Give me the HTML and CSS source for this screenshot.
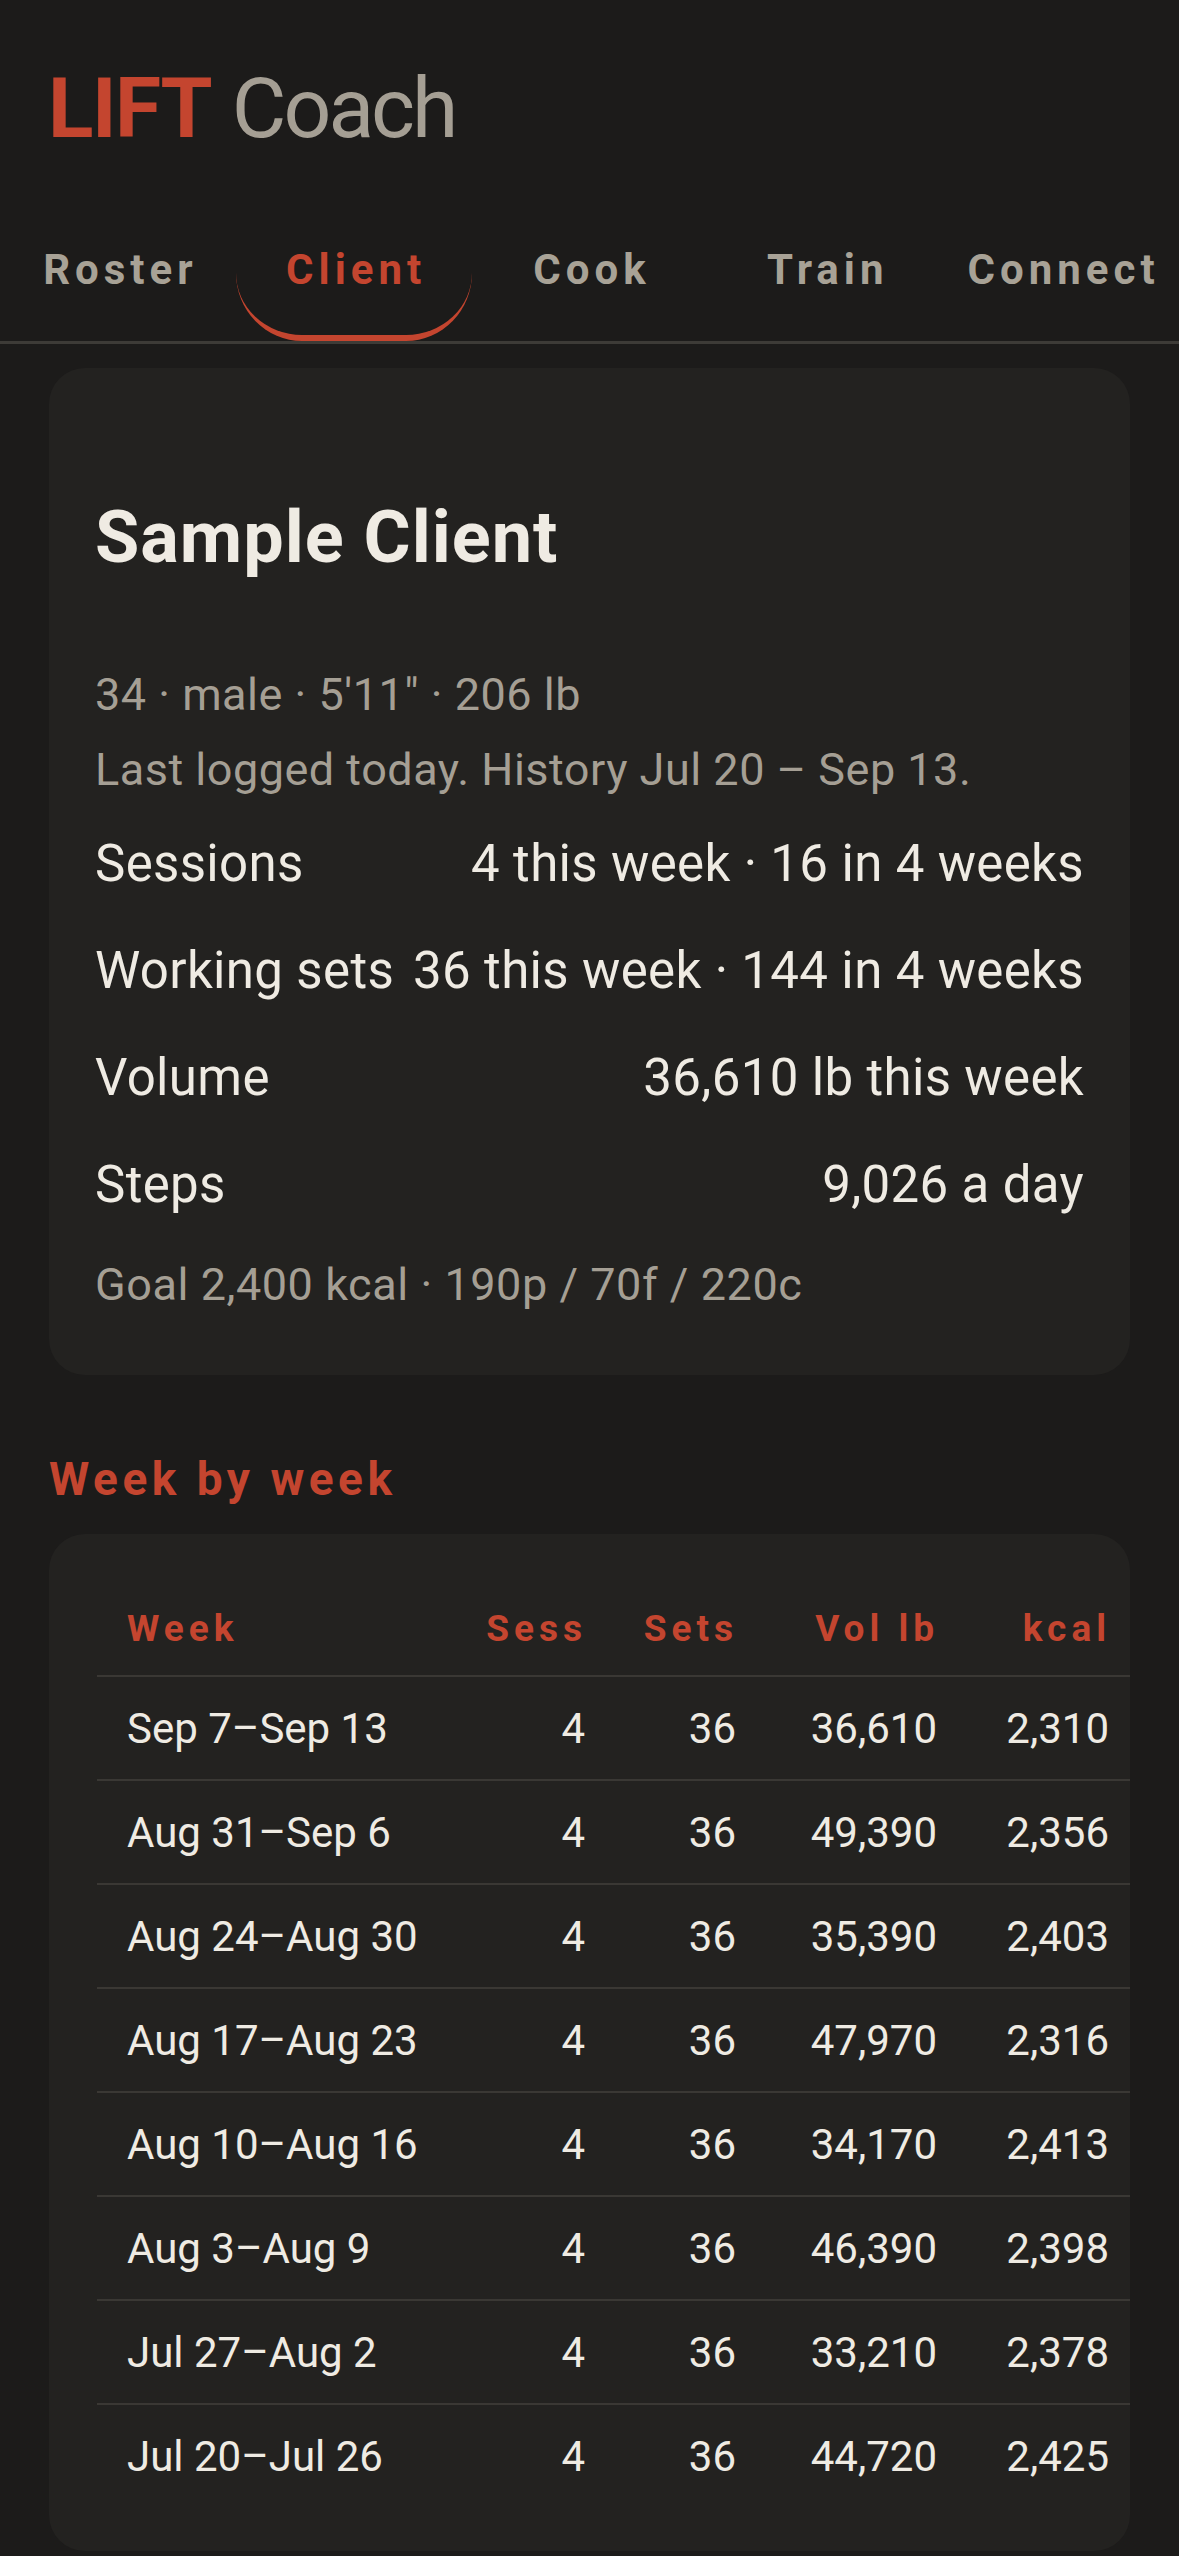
FILE: index.html
```html
<!DOCTYPE html>
<html lang="en">
<head>
<meta charset="utf-8">
<meta name="viewport" content="width=device-width, initial-scale=1">
<title>LIFT Coach</title>
<link rel="stylesheet" href="styles.css">
</head>
<body>
<header class="top">
  <h1 class="brand"><span class="brand-lift">LIFT</span> <span class="brand-coach">Coach</span></h1>
</header>
<nav class="tabs">
  <a class="tab">Roster</a>
  <a class="tab tab-active">Client</a>
  <a class="tab">Cook</a>
  <a class="tab">Train</a>
  <a class="tab">Connect</a>
</nav>
<main class="content">
  <section class="card profile">
    <h2 class="client-name">Sample Client</h2>
    <div class="meta">
      <p>34 · male · 5′11″ · 206 lb</p>
      <p>Last logged today. History Jul 20 – Sep 13.</p>
    </div>
    <dl class="stats">
      <div class="stat"><dt>Sessions</dt><dd>4 this week · 16 in 4 weeks</dd></div>
      <div class="stat"><dt>Working sets</dt><dd>36 this week · 144 in 4 weeks</dd></div>
      <div class="stat"><dt>Volume</dt><dd>36,610 lb this week</dd></div>
      <div class="stat"><dt>Steps</dt><dd>9,026 a day</dd></div>
    </dl>
    <p class="goal">Goal 2,400 kcal · 190p / 70f / 220c</p>
  </section>

  <h3 class="section-title">Week by week</h3>
  <section class="card table-card">
    <table class="weeks">
      <colgroup>
        <col class="col-week">
        <col class="col-sess">
        <col class="col-sets">
        <col class="col-vol">
        <col class="col-kcal">
      </colgroup>
      <thead>
        <tr><th>Week</th><th>Sess</th><th>Sets</th><th>Vol lb</th><th>kcal</th></tr>
      </thead>
      <tbody>
        <tr><td>Sep 7–Sep 13</td><td>4</td><td>36</td><td>36,610</td><td>2,310</td></tr>
        <tr><td>Aug 31–Sep 6</td><td>4</td><td>36</td><td>49,390</td><td>2,356</td></tr>
        <tr><td>Aug 24–Aug 30</td><td>4</td><td>36</td><td>35,390</td><td>2,403</td></tr>
        <tr><td>Aug 17–Aug 23</td><td>4</td><td>36</td><td>47,970</td><td>2,316</td></tr>
        <tr><td>Aug 10–Aug 16</td><td>4</td><td>36</td><td>34,170</td><td>2,413</td></tr>
        <tr><td>Aug 3–Aug 9</td><td>4</td><td>36</td><td>46,390</td><td>2,398</td></tr>
        <tr><td>Jul 27–Aug 2</td><td>4</td><td>36</td><td>33,210</td><td>2,378</td></tr>
        <tr><td>Jul 20–Jul 26</td><td>4</td><td>36</td><td>44,720</td><td>2,425</td></tr>
      </tbody>
    </table>
  </section>
</main>
</body>
</html>
```

FILE: styles.css
```css
* { box-sizing: border-box; }

html, body {
  margin: 0;
  padding: 0;
  background: #1c1b1a;
}

body {
  font-family: Roboto, "Inter", "Liberation Sans", sans-serif;
  color: #efebe3;
}

.top {
  padding: 67px 48px 0;
}

.brand {
  margin: 0;
  font-size: 84px;
  line-height: 84px;
  font-weight: 400;
  white-space: nowrap;
}

.brand-lift {
  color: #c4452f;
  font-weight: 700;
  letter-spacing: -1.5px;
}

.brand-coach {
  color: #a59f94;
  font-weight: 400;
  letter-spacing: -3px;
}

.tabs {
  display: flex;
  margin-top: 70px;
  border-bottom: 3px solid #3d3b37;
}

.tab {
  flex: 1 1 0;
  text-align: center;
  padding: 24px 0 40px;
  font-size: 42px;
  line-height: 50px;
  font-weight: 700;
  letter-spacing: 5px;
  text-indent: 5px;
  color: #a8a296;
  border-bottom: 6px solid transparent;
  border-radius: 0 0 66px 66px / 0 0 68px 68px;
}

.tab-active {
  color: #c4452f;
  border-bottom-color: #c4452f;
}

.content {
  padding: 24px 49px 4px;
}

.card {
  background: #232220;
  border-radius: 36px;
}

.profile {
  padding: 127px 46px 59px 46px;
}

.client-name {
  margin: 0;
  font-size: 72px;
  line-height: 86px;
  font-weight: 700;
  color: #efebe3;
  letter-spacing: 1px;
}

.meta {
  margin-top: 76px;
  font-size: 45px;
  line-height: 75px;
  color: #a59f94;
  letter-spacing: 0.5px;
}

.meta p {
  margin: 0;
  white-space: nowrap;
}

.stats {
  margin: 3px 0 0;
}

.stat {
  display: flex;
  justify-content: space-between;
  font-size: 51px;
  line-height: 107px;
  letter-spacing: 0.35px;
  white-space: nowrap;
}

.stat dt,
.stat dd {
  margin: 0;
}

.goal {
  margin: 15px 0 0;
  font-size: 45px;
  line-height: 63px;
  letter-spacing: 0.55px;
  color: #a59f94;
  white-space: nowrap;
}

.section-title {
  margin: 77px 0 27px;
  font-size: 46px;
  line-height: 55px;
  font-weight: 700;
  letter-spacing: 4.5px;
  color: #c4452f;
}

.table-card {
  padding: 48px 0 43px 48px;
  overflow: hidden;
}

.weeks {
  width: 100%;
  border-collapse: collapse;
  table-layout: fixed;
}

.col-week { width: 359px; }
.col-sess { width: 150px; }
.col-sets { width: 151px; }
.col-vol { width: 201px; }
.col-kcal { width: 172px; }

.weeks th,
.weeks td {
  padding: 0 21px 0 30px;
  text-align: right;
  vertical-align: middle;
  white-space: nowrap;
}

.weeks th:first-child,
.weeks td:first-child {
  text-align: left;
}

.weeks th {
  height: 94px;
  font-size: 37px;
  font-weight: 700;
  letter-spacing: 5px;
  color: #c4452f;
}

.weeks th:not(:first-child) {
  padding-right: 19px;
}

.weeks thead tr {
  border-bottom: 2px solid #3a3834;
}

.weeks td {
  height: 104px;
  font-size: 42px;
  color: #efebe3;
}

.weeks tbody tr {
  border-bottom: 2px solid #3a3834;
}

.weeks tbody tr:last-child {
  border-bottom: none;
}
```
